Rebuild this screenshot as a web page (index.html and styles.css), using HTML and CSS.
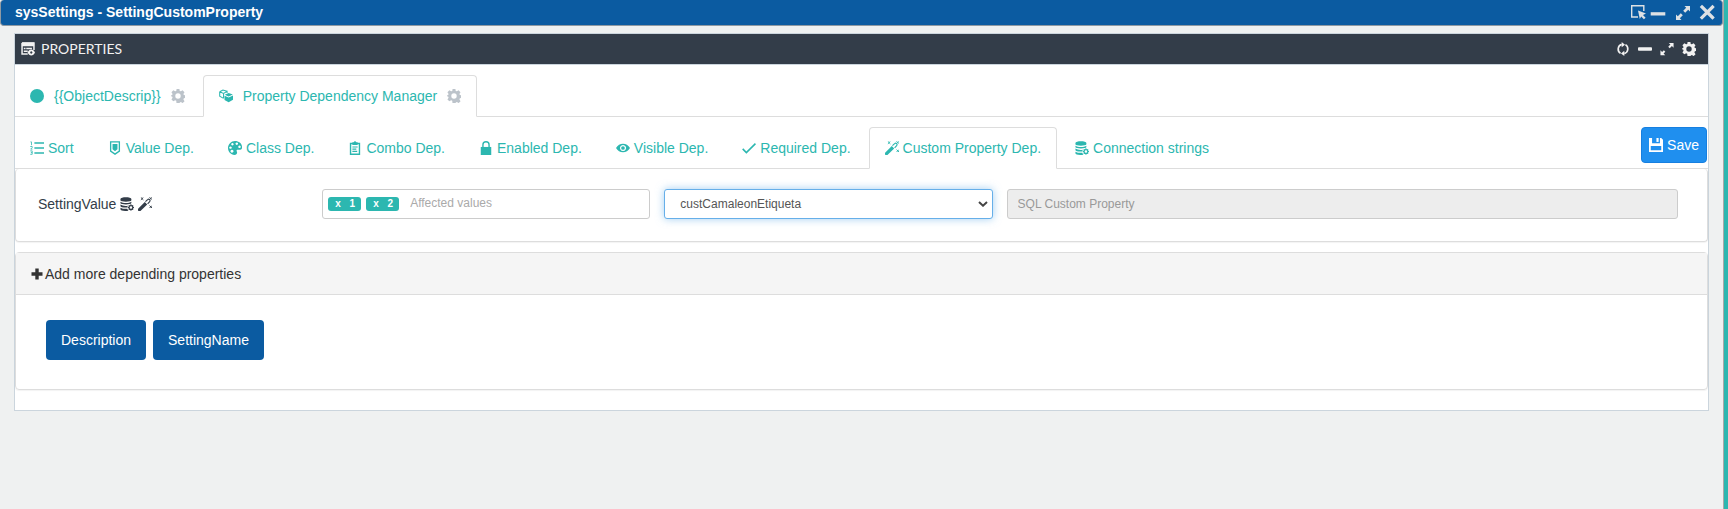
FILE: index.html
```html
<!DOCTYPE html>
<html lang="en">
<head>
<meta charset="utf-8">
<title>sysSettings - SettingCustomProperty</title>
<link rel="stylesheet" href="styles.css">
</head>
<body>
<svg class="sprite" aria-hidden="true">
  <symbol id="gear" viewBox="0 0 16 16"><path fill-rule="evenodd" d="M6.400 0h3.200l.4 2.200 1.300.5 1.900-1.200 2.200 2.200-1.200 1.900.5 1.300 2.300.4v2.900l-2.300.4-.5 1.400 1.300 1.900-2.200 2.200-2-1.300-1.300.5-.4 2.600H6.400L6 13.300l-1.300-.5-2 1.300-2.200-2.200 1.300-1.900-.5-1.400L0 8.200V7.300l1.300-.4.5-1.300L.5 3.700l2.200-2.200 2 1.200L6 2.200zM8 4.800a3.100 3.100 0 1 0 0 6.200 3.100 3.100 0 0 0 0-6.200z"/></symbol>
  <symbol id="database" viewBox="0 0 16 16"><path d="M.5 2.400C.5-.5 13-.5 13 2.400v1.400C13 6 .5 6 .5 3.800zM.5 5.400c2.500 1.900 10 1.900 12.500 0v1.500c0 2.200-12.500 2.200-12.500 0zM.5 8.700c2.300 1.600 5.500 1.700 8.700 1.300-.6.600-.9 1.300-.9 2.100C4 12.300.5 11.800.5 10.400zM.5 12.200c2.200 1.300 5.200 1.500 7.900 1.300.2.900.6 1.500 1.200 2.100C5 16.300.5 15.700.5 14z"/><circle cx="12.500" cy="12" r="2.200" fill="none" stroke="currentColor" stroke-width="1.400"/><path d="M12.500 8.400v1.500M12.500 14v1.700M8.900 12h1.500M14.500 12H16.200M10 9.500l1 1M14 13.500l1 1M15 9.500l-1 1M11 13.500l-1 1" stroke="currentColor" stroke-width="1.200"/></symbol>
  <symbol id="wand" viewBox="0 0 16 16"><path d="M.4 13.200 7.800 5.800l2.700 2.700L3.100 15.800A1.800 1.800 0 0 1 .4 13.200z"/><path d="m8.500 5.300 2.500-2.300a1.600 1.600 0 0 1 2.300 2.300l-2.300 2.500" fill="none" stroke="currentColor" stroke-width="1.300"/><path d="m3.300.5 2.800 2.800m0-2.800L3.300 3.300M13.200.3 16 3.100m0-2.800-2.800 2.800M13.200 9.800l2.800 2.800m0-2.800-2.800 2.800" stroke="currentColor" stroke-width="1.100"/></symbol>
</svg>
<div class="window">
  <header class="titlebar">
    <h1 class="window-title">sysSettings - SettingCustomProperty</h1>
    <div class="window-tools">
      <button class="tool-select" aria-label="Select"><svg viewBox="0 0 16 16"><path d="M8 13H1.700V1.700h12.100V7" fill="none" stroke="currentColor" stroke-width="1.400"/><path d="m8 6.500 8 3-3 1.400 2.600 2.800-1.700 1.600-2.700-2.700L9.800 15z"/></svg></button>
      <button class="tool-min" aria-label="Minimize"><svg viewBox="0 0 16 16"><path d="M.7 8.200h14.600v3.300H.7z"/></svg></button>
      <button class="tool-max" aria-label="Maximize"><svg viewBox="0 0 16 16"><path d="M9.500 2H15v5.500l-1.800-1.800-3 3-2-2 3-3zM6.500 16H1v-5.500l1.800 1.800 3-3 2 2-3 3z"/></svg></button>
      <button aria-label="Close"><svg viewBox="0 0 16 16"><path d="m3 3 10.500 10.500M13.500 3 3 13.500" stroke="currentColor" stroke-width="3.200" stroke-linecap="square"/></svg></button>
    </div>
  </header>
  <main class="box">
    <div class="box-head">
      <svg class="icon" viewBox="0 0 16 16"><path d="M1.200 1.200h13.600v8M1.200 1.200v12.500h6.500" fill="none" stroke="currentColor" stroke-width="1.700"/><path d="M1 .5h14v4.300H1zM3.200 6.700h2v1.500h-2zM6 6.700h6.500v1.500H6zM3.200 9.800h4.500v1.500H3.200z"/><path fill-rule="evenodd" d="M7.500 12c1.800-4.500 6.700-4.500 8.500 0-1.800 4.500-6.700 4.500-8.500 0zm4.200-1.300a1.300 1.300 0 1 0 .1 0z"/></svg>
      <h2 class="box-title">PROPERTIES</h2>
      <div class="box-tools">
        <button aria-label="Refresh"><svg viewBox="0 0 16 16"><path d="M5.200 13A5.700 5.700 0 0 1 6.500 2.700M10.800 3a5.700 5.700 0 0 1-1.300 10.300" fill="none" stroke="currentColor" stroke-width="1.900"/><path d="M6.500 0 10.300 3 6.500 6zM9.500 10v6l-3.800-3z"/></svg></button>
        <button aria-label="Collapse"><svg viewBox="0 0 16 16"><rect x="0" y="6.100" width="16" height="3.800" rx="1"/></svg></button>
        <button aria-label="Expand"><svg viewBox="0 0 16 16"><path d="M10 1h5.500v5.500l-1.900-1.900-2.500 2.500-1.700-1.700 2.500-2.500zM6 15H.5V9.500l1.900 1.900 2-2 1.700 1.700-2 2z"/></svg></button>
        <button aria-label="Settings"><svg viewBox="0 0 16 16"><use href="#gear"/></svg></button>
      </div>
    </div>
    <div class="box-body">
      <nav class="tabs tabs-main">
        <a class="tab" href="#object"><svg class="icon" viewBox="0 0 16 16"><circle cx="8" cy="8" r="8"/></svg>{{ObjectDescrip}}<svg class="icon muted"><use href="#gear"/></svg></a>
        <a class="tab active" href="#manager"><svg class="icon" viewBox="0 0 16 16"><path d="m.8 3.200 3.700-2 4.700 1.500M.8 3.200v5l4.400 2.500M.8 3.200l4.400 1.900 4-2.400v1.800M5.200 5.100v5.600" fill="none" stroke="currentColor" stroke-width="1.200"/><path d="m6.300 7.700 4.700 2.100 5-2.300v4.700l-5 3-4.700-2.600zM6.600 6.500 11 4.500l4.800 1.800L11 8.600z"/></svg>Property Dependency Manager<svg class="icon muted"><use href="#gear"/></svg></a>
      </nav>
      <div class="toolbar">
        <nav class="tabs">
          <a class="tab" href="#sort"><svg class="icon" viewBox="0 0 16 16"><path d="M5 2.300h11M5 8h11M5 13.700h11" stroke="currentColor" stroke-width="1.900"/><path d="M.5 1h1.200v3.800M.3 6.300h2.200v1.200L.8 9.300h2M.3 11.300h2.200v3.900H.3M1 13.200h1.500" fill="none" stroke="currentColor" stroke-width=".9"/></svg>Sort</a>
          <a class="tab" href="#value"><svg class="icon" viewBox="0 0 16 16"><path d="M3 .9h10v10.600L8 15l-5-3.500z" fill="none" stroke="currentColor" stroke-width="1.500"/><path d="M5.200 3.500h5.600v6L8 11.700 5.200 9.500z"/></svg>Value Dep.</a>
          <a class="tab" href="#class"><svg class="icon" viewBox="0 0 16 16"><path fill-rule="evenodd" d="M8 0c5 0 8.500 3.500 8 8-.4 2.500-3 2.200-5 2-1.400 0-1.400 1.200-.8 2.200C11 14 9.500 16 7.500 16 3 15.600 0 12 0 8s3.500-8 8-8zM5 2.300a1.400 1.400 0 1 0 .1 0zm5-.6a1.400 1.400 0 1 0 .1 0zM2.800 6.200a1.400 1.400 0 1 0 .1 0zm10.300-1a1.400 1.400 0 1 0 .1 0zM4.500 10a1.700 1.700 0 1 0 .1 0z"/></svg>Class Dep.</a>
          <a class="tab" href="#combo"><svg class="icon" viewBox="0 0 16 16"><path d="M2.900 2.800h10.200v12.400H2.900z" fill="none" stroke="currentColor" stroke-width="1.600"/><path d="M5 1.500h1.700a1.300 1.300 0 0 1 2.600 0H11v3H5zM5 6.200h6v1.300H5zM5 8.700h4.500V10H5zM5 11.200h5.500v1.300H5z"/></svg>Combo Dep.</a>
          <a class="tab" href="#enabled"><svg class="icon" viewBox="0 0 16 16"><path d="M2 6.800h12V16H2z"/><path d="M4.500 7.500V4.400a3.500 3.500 0 0 1 7 0v3.100" fill="none" stroke="currentColor" stroke-width="1.600"/></svg>Enabled Dep.</a>
          <a class="tab" href="#visible"><svg class="icon" viewBox="0 0 16 16"><path fill-rule="evenodd" d="M0 8c3.500-6.500 12.500-6.500 16 0-3.500 6.500-12.500 6.500-16 0zm8-3.500a3.500 3.500 0 1 0 .1 0z"/><circle cx="8" cy="8" r="2.100"/></svg>Visible Dep.</a>
          <a class="tab" href="#required"><svg class="icon" viewBox="0 0 16 16"><path d="m.8 9 4.200 4.300L15.400 3" fill="none" stroke="currentColor" stroke-width="1.800"/></svg>Required Dep.</a>
          <a class="tab active" href="#custom"><svg class="icon"><use href="#wand"/></svg>Custom Property Dep.</a>
          <a class="tab" href="#connections"><svg class="icon"><use href="#database"/></svg>Connection strings</a>
        </nav>
        <button class="save"><svg class="icon" viewBox="0 0 16 16"><path fill-rule="evenodd" d="M0 0h3.500v6h9V0H14l2 2v14H0zm2 9v5h12V9z"/><path d="M8.500 0H11v4.500H8.500z"/></svg>Save</button>
      </div>
      <section class="card card-form">
        <label class="field-label" for="affected">SettingValue <svg class="icon"><use href="#database"/></svg> <svg class="icon"><use href="#wand"/></svg></label>
        <div class="control tags">
          <button class="tag"><span>x</span><span>1</span></button>
          <button class="tag"><span>x</span><span>2</span></button>
          <input class="tag-input" id="affected" type="text" placeholder="Affected values">
        </div>
        <div class="select-wrap">
          <select class="control select" aria-label="Custom property"><option>custCamaleonEtiqueta</option></select>
          <svg class="chevron" viewBox="0 0 10 6"><path d="m1 1 4 3.700L9 1" fill="none" stroke="currentColor" stroke-width="2"/></svg>
        </div>
        <input class="control" type="text" aria-label="SQL Custom Property" placeholder="SQL Custom Property" disabled>
      </section>
      <section class="card">
        <h3 class="card-head"><svg class="icon plus" viewBox="0 0 12 12"><path d="M4.300.5h3.400v3.800h3.800v3.400H7.700v3.800H4.300V7.700H.5V4.300h3.800z"/></svg>Add more depending properties</h3>
        <div class="card-body">
          <button class="property">Description</button>
          <button class="property">SettingName</button>
        </div>
      </section>
    </div>
  </main>
</div>
</body>
</html>
```
FILE: styles.css
```css
* { box-sizing: border-box; }
body {
  margin: 0;
  padding-right: 4px;
  background: #2cb7b0;
  color: #333d49;
  font: 14px/20px "Liberation Sans", Arial, sans-serif;
}
button, input, select { font: inherit; color: inherit; margin: 0; }
button { cursor: pointer; border: 0; background: none; padding: 0; }
h1, h2, h3 { margin: 0; font-size: 14px; }
svg { fill: currentColor; display: block; }
.sprite { position: absolute; width: 0; height: 0; }
.icon { width: 14px; height: 14px; flex: none; }

.window {
  min-height: 100vh;
  background: #eff1f1;
  border-right: 1px solid #a9a9a9;
}
.titlebar {
  display: flex;
  align-items: center;
  justify-content: space-between;
  height: 26px;
  padding: 0 7px 2px 14px;
  border: 1px solid #8f9aa3;
  border-top: 0;
  border-radius: 4px;
  background: #0b5ba1;
  color: #fff;
}
.window-title { font-weight: bold; }
.window-tools { display: flex; color: #dde1e4; }
.window-tools svg { width: 16px; height: 16px; }
.tool-select { margin-right: 4px; }
.tool-min { margin-right: 9px; }
.tool-max { margin-right: 8px; }

.box {
  margin: 7px 14px 0;
  border: 1px solid #cbd5dd;
  background: #fff;
}
.box-head {
  display: flex;
  align-items: center;
  gap: 6px;
  height: 31px;
  padding: 0 12px 0 6px;
  border-bottom: 1px solid #cbd5dd;
  background: #333d49;
  color: #f2f2f2;
}
.box-title { flex: 1; font: 14px/20px Lato, sans-serif; }
.box-tools { display: flex; gap: 8px; }
.box-tools svg { width: 14px; height: 14px; }
.box-body { padding: 10px 0 20px; }

.tabs { display: flex; gap: 2px; }
.tab {
  display: flex;
  align-items: center;
  gap: 4px;
  height: 42px;
  margin-bottom: -1px;
  padding: 0 15px;
  border: 1px solid transparent;
  border-radius: 4px 4px 0 0;
  color: #2cb7b0;
  text-decoration: none;
  white-space: nowrap;
}
.tab:first-child { padding-left: 14px; }
.tab.active { background: #fff; border-color: #ddd; border-bottom-color: #fff; }
.tabs-main { border-bottom: 1px solid #ddd; }
.tabs-main .tab { gap: 10px; }
.muted { color: #bcc3ca; }

.toolbar {
  display: flex;
  justify-content: space-between;
  align-items: flex-start;
  height: 42px;
  margin-top: 10px;
  border-bottom: 1px solid #ddd;
}
.save {
  display: flex;
  align-items: center;
  gap: 4px;
  height: 36px;
  margin-right: 1px;
  padding: 0 7px;
  border: 1px solid #167fe0;
  border-radius: 4px;
  background: #1f8fef;
  color: #fff;
}

.card {
  margin-bottom: 10px;
  border: 1px solid #ddd;
  border-radius: 4px;
  box-shadow: 0 1px 1px rgba(0, 0, 0, .05);
}
.card:last-child { margin-bottom: 0; }
.card-form {
  display: grid;
  grid-template-columns: 270fr 328fr 328fr 671fr;
  gap: 14px;
  align-items: center;
  border-top: 0;
  padding: 20px 29px 22px 22px;
}
.field-label { display: flex; align-items: center; gap: 4px; }
.control {
  width: 100%;
  height: 30px;
  padding: 0 10px;
  border: 1px solid #ccc;
  border-radius: 3px;
  background: #fff;
  font-size: 12px;
}
.control:disabled { background: #ededed; }
::placeholder { color: #999; opacity: 1; }
.tags { display: flex; align-items: center; gap: 5px; padding: 0 5px; }
.tag {
  display: flex;
  justify-content: space-between;
  width: 33px;
  padding: 0 6px 0 7px;
  border-radius: 3px;
  background: #2cb7b0;
  color: #fff;
  font-weight: bold;
  font-size: 10px;
  line-height: 14px;
}
.tag-input { flex: 1; min-width: 0; border: 0; outline: 0; padding: 0 6px 2px; font-size: 12px; background: none; }
.tag-input::placeholder { color: #aaa; }
.select-wrap { display: grid; align-items: center; }
.select-wrap > * { grid-area: 1 / 1; }
.select {
  appearance: none;
  padding: 0 15px;
  border-color: #66afe9;
  box-shadow: 0 0 8px rgba(102, 175, 233, .6);
  color: #555;
}
.chevron { justify-self: end; width: 10px; height: 6px; margin-right: 5px; pointer-events: none; color: #444; }

.card-head {
  display: flex;
  align-items: center;
  gap: 2px;
  height: 42px;
  padding: 0 15px;
  border-bottom: 1px solid #ddd;
  background: #f5f5f5;
  color: #333;
  font-weight: normal;
}
.plus { width: 12px; height: 12px; }
.card-body { display: flex; gap: 7px; padding: 25px 30px 29px; }
.property {
  height: 40px;
  padding: 0 15px;
  border-radius: 4px;
  background: #0b5ba1;
  color: #fff;
}
```
